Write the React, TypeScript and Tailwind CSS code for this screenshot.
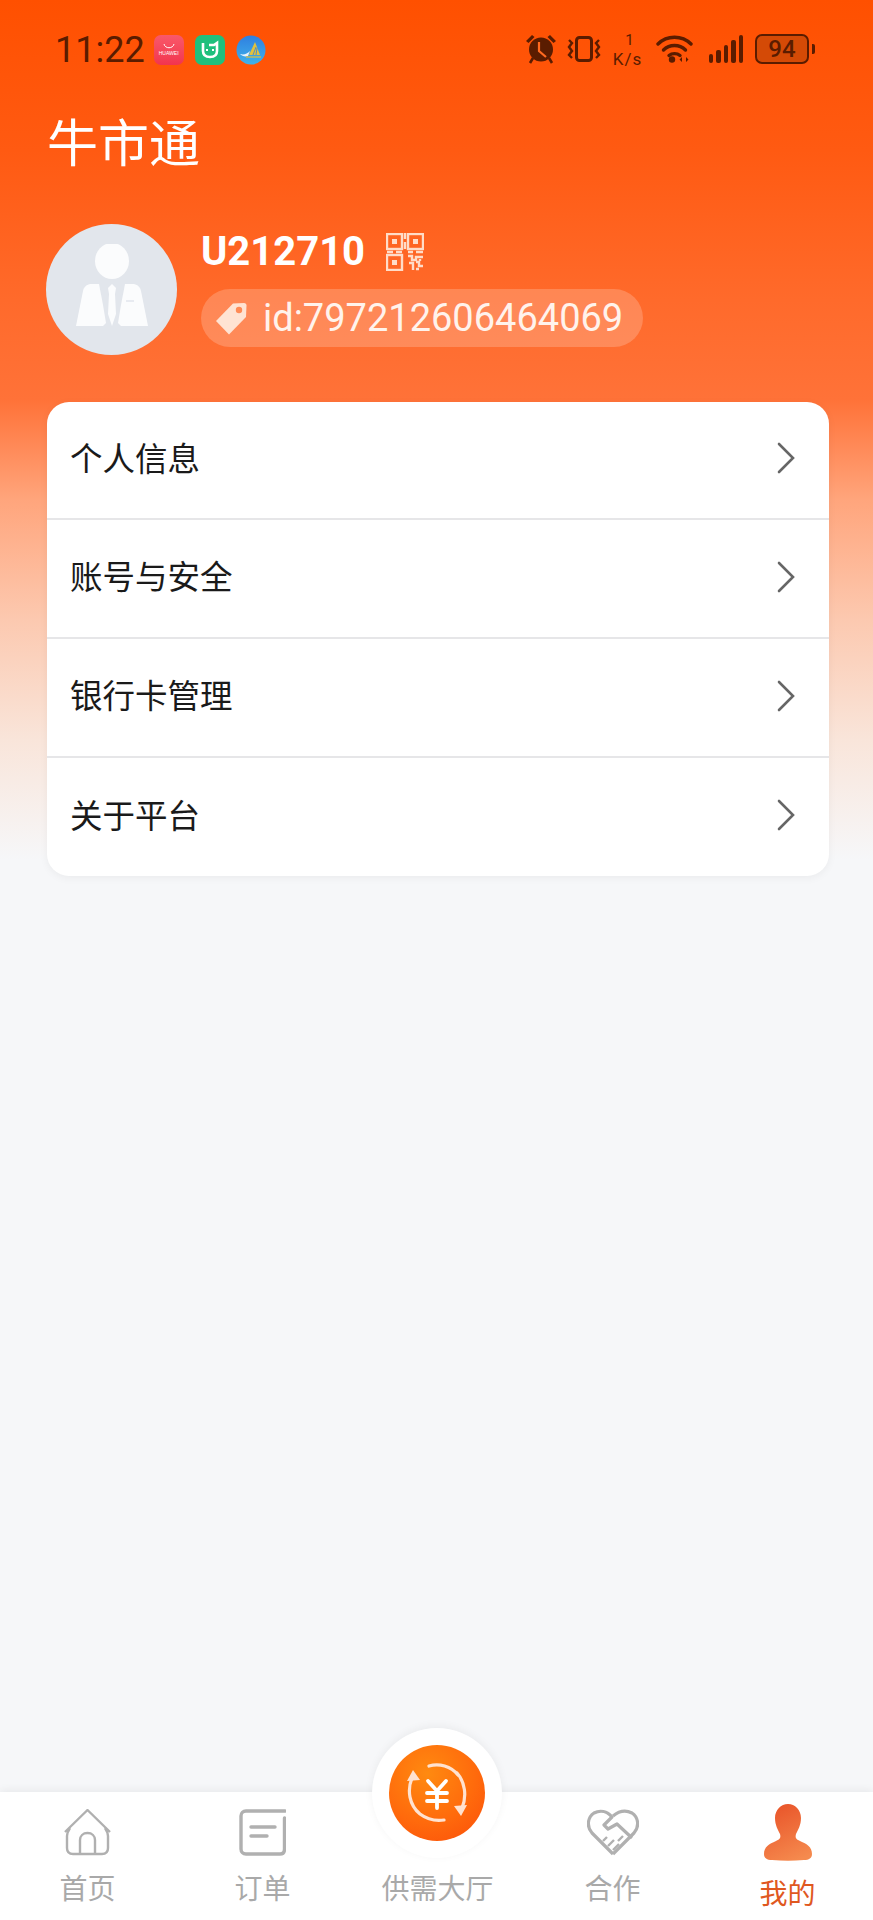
const CJK = "font-['Noto_Sans_CJK_SC','Noto_Sans',sans-serif]";

const MENU = ["个人信息", "账号与安全", "银行卡管理", "关于平台"];

function AppIcons() {
  return (
    <div className="ml-[9px] flex items-center gap-[11px]">
      <div className="flex h-[30px] w-[30px] flex-col items-center justify-center rounded-[7px] bg-gradient-to-b from-[#f9586a] to-[#f2344e]">
        <svg width="12" height="6" viewBox="0 0 12 6" fill="none" stroke="#fff" strokeWidth="1">
          <path d="M1 1c1 5 9 5 10 0" />
        </svg>
        <span className="mt-[1px] font-['Liberation_Sans',sans-serif] text-[5px] leading-[7px] text-white">HUAWEI</span>
      </div>
      <div className="flex h-[30px] w-[30px] items-center justify-center rounded-[7px] bg-[#1fc07d]">
        <svg width="20" height="20" viewBox="0 0 20 20" fill="none" stroke="#fff" strokeWidth="2.6">
          <path d="M3 3v8c0 4 3 6 7 6s7-2 7-6V3l-3 2H9" />
          <path d="M7 9v2M13 9v2" strokeWidth="2" />
        </svg>
      </div>
      <svg width="30" height="30" viewBox="0 0 30 30">
        <defs>
          <linearGradient id="blueApp" x1="0" y1="0" x2="0" y2="1">
            <stop offset="0" stopColor="#2f7fe0" />
            <stop offset="1" stopColor="#3fb2ea" />
          </linearGradient>
        </defs>
        <circle cx="15" cy="15" r="14.5" fill="url(#blueApp)" />
        <path d="M13 20l6-13 5 13z" fill="#e2c13c" />
        <path d="M17 20l3-8M20 20l1-7" stroke="#2f7fe0" strokeWidth="0.8" />
        <path d="M4 19c4 1 7 0 10-3l-2 5c-3 1-6 0-8-2z" fill="#e9f3fb" />
        <path d="M10 22h15" stroke="#e2c13c" strokeWidth="1.2" />
      </svg>
    </div>
  );
}

function StatusIcons() {
  const c = "#5a1c00";
  return (
    <div className="-mt-[1px] flex items-center">
      {/* alarm */}
      <svg width="30" height="30" viewBox="0 0 30 30" fill={c}>
        <circle cx="15" cy="15.500" r="12" />
        <path d="M0 7l6-6 2.500 2-6 6zM30 7l-6-6-2.500 2 6 6z" />
        <path d="M7 24l-3 5M23 24l3 5" stroke={c} strokeWidth="2.600" />
        <path d="M13 8v9l7 6" stroke="#ff6a20" strokeWidth="2.200" fill="none" />
      </svg>
      {/* vibrate */}
      <svg className="ml-[11px]" width="34" height="26" viewBox="0 0 34 26" fill="none" stroke={c} strokeWidth="3">
        <rect x="9.500" y="1.500" width="15" height="23" rx="3" />
        <path d="M2 4l3 3-3 4 3 4-3 4 3 3M32 4l-3 3 3 4-3 4 3 4-3 3" strokeWidth="2.400" />
      </svg>
      {/* speed */}
      <div className="-mb-[5px] -mt-[3px] ml-[12px] flex w-[30px] flex-col items-center font-['Roboto',sans-serif] text-[#5a1c00]">
        <span className="pl-[4px] text-[15px] leading-[17px]">1</span>
        <span className="text-[17px] leading-[20px] tracking-[1px]">K/s</span>
      </div>
      {/* wifi */}
      <svg className="ml-[13px]" width="37" height="28" viewBox="0 0 37 28" fill="none" stroke={c} strokeWidth="3.400" strokeLinecap="round">
        <path d="M2 9c9-9 24-9 33 0" />
        <path d="M7.500 15c6-6 16-6 22 0" />
        <path d="M13 20.500c3-2.500 8-2.500 11 0" />
        <circle cx="16" cy="24.500" r="3.200" fill={c} stroke="none" />
        <path d="M26 22l-2.500 2.500 2.500 2.500zM30 22l2.500 2.500-2.500 2.500z" fill={c} stroke="none" />
      </svg>
      {/* signal */}
      <div className="ml-[16px] flex h-[28px] items-end gap-[3px]">
        <div className="h-[9px] w-[4.500px] rounded-[2px] bg-[#5a1c00]" />
        <div className="h-[13px] w-[4.500px] rounded-[2px] bg-[#5a1c00]" />
        <div className="h-[18px] w-[4.500px] rounded-[2px] bg-[#5a1c00]" />
        <div className="h-[23px] w-[4.500px] rounded-[2px] bg-[#5a1c00]" />
        <div className="h-[28px] w-[4.500px] rounded-[2px] bg-[#5a1c00]" />
      </div>
      {/* battery */}
      <div className="ml-[12px] flex h-[30px] w-[54px] items-center justify-center rounded-[7px] border-[2px] border-[#5a1c00] bg-[#d44a06] font-['Roboto',sans-serif] text-[24px] font-medium text-[#5a1c00]">
        94
      </div>
      <div className="ml-[3px] h-[10px] w-[3px] rounded-r-[2px] bg-[#5a1c00]" />
    </div>
  );
}

function QrIcon() {
  return (
    <svg className="mt-[5px]" width="38" height="38" viewBox="0 0 38 38" fill="none" stroke="#ffdcc8" strokeWidth="2.400">
      <rect x="1" y="1" width="15" height="15" />
      <rect x="22" y="1" width="15" height="15" />
      <rect x="1" y="22" width="15" height="15" />
      <rect x="6" y="6" width="5" height="5" fill="#ffdcc8" stroke="none" />
      <rect x="27" y="6" width="5" height="5" fill="#ffdcc8" stroke="none" />
      <rect x="6" y="27" width="5" height="5" fill="#ffdcc8" stroke="none" />
      <path d="M19 0v6M19 9v7M1 19h6M10 19h6M22 19h5M30 19h7M22 23h4v4h4v-3h7M23 30h4v7M30 29h3v4h4M30 36h3M34 26v2" />
    </svg>
  );
}

function TagIcon() {
  return (
    <svg width="31" height="33" viewBox="0 0 31 33">
      <path d="M0 19L17 1.500 28 1c1.500 0 2.500 1 2.500 2.500L30 15 13 32.500z" fill="#ffe3d3" />
      <circle cx="23" cy="8" r="3.200" fill="#ff8a56" />
    </svg>
  );
}

function Avatar() {
  return (
    <div className="flex h-[131px] w-[131px] shrink-0 items-center justify-center rounded-full bg-[#e2e6ec] pb-[10px]">
      <svg width="72" height="82" viewBox="0 0 72 82" fill="#fbfcfd">
        <ellipse cx="36" cy="17" rx="17" ry="18" />
        <path d="M14 40c-4 1-6 3-7 7L0 82h27l3-3-3-18-4-21z" />
        <path d="M58 40c4 1 6 3 7 7l7 35H45l-3-3 3-18 4-21z" fill="#fbfcfd" />
        <path d="M36 40l-4 4 1 6-1 20 4 12 4-12-1-20 1-6z" />
        <path d="M50 57h8" stroke="#e2e6ec" strokeWidth="1.500" />
      </svg>
    </div>
  );
}

function HomeIcon() {
  return (
    <svg width="47" height="47" viewBox="0 0 47 47" fill="none" stroke="#b0b0b0" strokeWidth="2.400" strokeLinejoin="round">
      <path d="M1 23L23.500 1 46 23" />
      <path d="M6 19c-2 3-3 5-3 8v12c0 4 2 6 6 6h29c4 0 6-2 6-6V27c0-3-1-5-3-8" />
      <path d="M16 45V31c0-4 3-7 7.500-7s7.500 3 7.500 7v14" />
    </svg>
  );
}

function OrderIcon() {
  return (
    <svg width="47" height="47" viewBox="0 0 47 47" fill="none" stroke="#b0b0b0" strokeWidth="3.400" strokeLinecap="round">
      <path d="M46 2H7C4 2 2 4 2 7v33c0 3 2 5 5 5h34c3 0 4.500-2 4.500-5V9" />
      <path d="M12 18h24M12 27h16" />
    </svg>
  );
}

function HeartIcon() {
  return (
    <svg width="52" height="47" viewBox="0 0 52 47" fill="none" stroke="#b0b0b0" strokeWidth="3.200" strokeLinejoin="round">
      <path d="M26 45L5 24C-1 17 1 8 7 4c6-3 13-2 18 4l-8 8 4 4 9-5 15 14" />
      <path d="M26 45l21-21c6-7 4-16-2-20-6-3-13-2-19 3" />
      <path d="M21 37l6-6M26 41l6-6M31 32l5-5M16 32l4-4" strokeWidth="2.400" />
    </svg>
  );
}

function PersonIcon() {
  return (
    <svg width="48" height="57" viewBox="0 0 48 57">
      <defs>
        <linearGradient id="personGrad" x1="0.300" y1="0" x2="0.700" y2="1">
          <stop offset="0" stopColor="#e9552a" />
          <stop offset="1" stopColor="#f58a4e" />
        </linearGradient>
      </defs>
      <path
        d="M24 0c7 0 13 6 13 14 0 7-3 12-5 16-1 4 0 5 4 7 7 3 12 6 12 13 0 4-3 6-8 6-11 1-21 1-32 0-5 0-8-2-8-6 0-7 5-10 12-13 4-2 5-3 4-7-2-4-5-9-5-16C11 6 17 0 24 0z"
        fill="url(#personGrad)"
      />
    </svg>
  );
}

function ExchangeIcon() {
  return (
    <svg width="60" height="60" viewBox="0 0 60 60" fill="none" stroke="#ffe2d0" strokeWidth="3.200" strokeLinecap="round">
      <path d="M22 3c10-3 22 0 29 9" />
      <path d="M5 15C0 27 2 42 13 51c8 6 17 7 24 6" />
      <path d="M55 45c5-12 3-26-5-35" />
      <path d="M0 18l6-11 7 10z" fill="#ffe2d0" stroke="none" />
      <path d="M60 42l-6 11-7-10z" fill="#ffe2d0" stroke="none" />
      <path d="M21 18l9 10 9-10M20 30h20M20 38h20M30 28v17" stroke="#fff" strokeWidth="3.800" />
    </svg>
  );
}

function Tab({ label, icon, active }: { label: string; icon: React.ReactNode; active?: boolean }) {
  return (
    <div className="flex flex-col items-center pt-[11px]">
      <div className="flex h-[58px] items-center justify-center">{icon}</div>
      <span className={active ? "mt-[14px] text-[28px] leading-[34px] text-[#e0581f]" : "mt-[9px] text-[28px] leading-[34px] text-[#a9a9a9]"}>
        {label}
      </span>
    </div>
  );
}

export default function App() {
  return (
    <div className={`${CJK} flex h-[1920px] flex-col overflow-hidden bg-[linear-gradient(180deg,#ff5000_0px,#ff5a12_150px,#ff6a2b_300px,#ff7238_400px,#ffa57c_500px,#fcc9b0_620px,#f9e5da_740px,#f6f7f9_860px)]`}>
      <div className="flex h-[100px] items-start justify-between pl-[55px] pr-[58px] pt-[35px]">
        <div className="flex items-center">
          <span className="font-['Roboto',sans-serif] text-[36px] leading-[30px] text-[#5a1c00]">11:22</span>
          <AppIcons />
        </div>
        <StatusIcons />
      </div>

      <h1 className="ml-[47px] mt-[10px] text-[51px] leading-[60px] text-white">牛市通</h1>

      <div className="mx-[46px] mt-[54px] flex items-start gap-[24px]">
        <Avatar />
        <div className="flex flex-col items-start pt-[4px]">
          <div className="flex items-start gap-[21px]">
            <span className="font-['Roboto',sans-serif] text-[40px] font-bold leading-[48px] text-white">U212710</span>
            <QrIcon />
          </div>
          <div className="mt-[13px] flex h-[58px] items-center gap-[16px] rounded-full bg-white/20 pl-[15px] pr-[20px]">
            <TagIcon />
            <span className="font-['Roboto',sans-serif] text-[38px] leading-[58px] text-[#fff3ec]">id:797212606464069</span>
          </div>
        </div>
      </div>

      <div className="ml-[47px] mt-[47px] w-[782px] rounded-[22px] bg-white shadow-[0_2px_8px_rgba(0,0,0,0.05)]">
        {MENU.map((item, i) => (
          <div
            key={item}
            className={
              i === 0
                ? "flex h-[118px] items-center justify-between border-b-2 border-[#e6e6e8] pb-[7px] pl-[23px] pr-[34px]"
                : i < MENU.length - 1
                  ? "flex h-[119px] items-center justify-between border-b-2 border-[#e6e6e8] pb-[7px] pl-[23px] pr-[34px]"
                  : "flex h-[118px] items-center justify-between pb-[7px] pl-[23px] pr-[34px]"
            }
          >
            <span className="text-[32.500px] leading-[40px] text-[#1a1a1a]">{item}</span>
            <svg className="mt-[3px]" width="18" height="32" viewBox="0 0 18 32" fill="none" stroke="#666" strokeWidth="2.600" strokeLinecap="round">
              <path d="M2 2l14 14L2 30" />
            </svg>
          </div>
        ))}
      </div>

      <div className="relative mt-auto grid h-[128px] grid-cols-[repeat(5,175px)] bg-white shadow-[0_-2px_8px_rgba(0,0,0,0.06)]">
        <Tab label="首页" icon={<HomeIcon />} />
        <Tab label="订单" icon={<OrderIcon />} />
        <div className="flex flex-col items-center pt-[78px]">
          <span className="whitespace-nowrap text-[28px] leading-[34px] text-[#a9a9a9]">供需大厅</span>
        </div>
        <Tab label="合作" icon={<HeartIcon />} />
        <Tab label="我的" icon={<PersonIcon />} active />
        <div className="absolute left-[372px] top-[-64px] flex h-[130px] w-[130px] items-center justify-center rounded-full bg-white shadow-[0_-2px_8px_rgba(0,0,0,0.05)]">
          <div className="flex h-[96px] w-[96px] items-center justify-center rounded-full bg-[radial-gradient(circle_at_40%_30%,#ff8a10,#ff6a0c_55%,#fb4e0a)]">
            <ExchangeIcon />
          </div>
        </div>
      </div>
    </div>
  );
}
